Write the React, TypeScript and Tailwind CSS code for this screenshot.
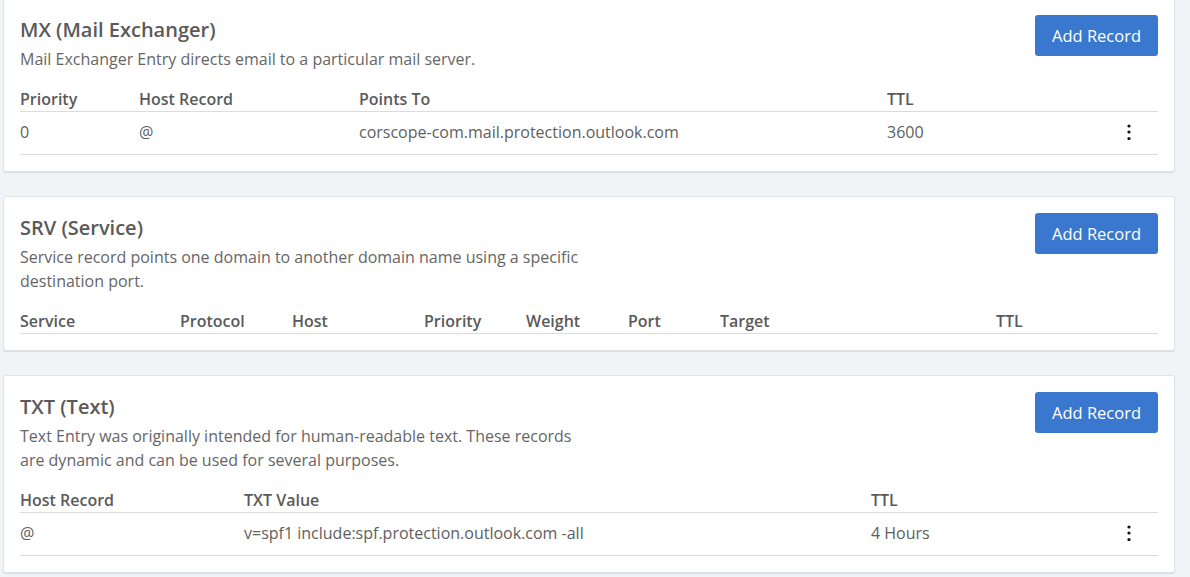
import React from "react";

const font = { fontFamily: '"Open Sans", "Noto Sans", sans-serif' };

function Kebab() {
  return (
    <svg width="4" height="16" viewBox="0 0 4 16" className="block">
      <circle cx="2" cy="2" r="1.6" fill="#111" />
      <circle cx="2" cy="8" r="1.6" fill="#111" />
      <circle cx="2" cy="14.5" r="1.6" fill="#111" />
    </svg>
  );
}

function Card({
  title,
  desc,
  cols,
  headers,
  rows,
}: {
  title: string;
  desc: string;
  cols: string;
  headers: string[];
  rows: string[][];
}) {
  return (
    <div className="bg-white border border-[#dfe3e7] rounded-[3px] shadow-[0_1px_1px_rgba(0,0,0,0.10)] px-4 pt-4 pb-4">
      <div className="flex justify-between">
        <div className="max-w-[572px]">
          <h2 className="text-[20px] leading-[28px] font-semibold text-[#5a5a5a] pt-[1px]">{title}</h2>
          <p className="text-[16px] leading-[24px] text-[#666] font-normal mt-[3px]">{desc}</p>
        </div>
        <button className="h-[41px] w-[123px] rounded-[3px] bg-[#3a78cf] text-white text-[16.5px] font-medium shrink-0 pt-[1px]">
          Add Record
        </button>
      </div>
      <div className="mt-[17px]">
        <div
          className="grid border-b border-[#dcdcdc] text-[16px] leading-[22px] font-semibold text-[#5a5a5a] pb-[1px]"
          style={{ gridTemplateColumns: cols }}
        >
          {headers.map((h, i) => (
            <div key={i}>{h}</div>
          ))}
          <div />
        </div>
        {rows.map((r, ri) => (
          <div
            key={ri}
            className="grid items-center h-[43px] border-b border-[#dcdcdc] text-[16px] text-[#606060] font-normal pb-[3px]"
            style={{ gridTemplateColumns: cols }}
          >
            {r.map((c, ci) => (
              <div key={ci}>{c}</div>
            ))}
            <div className="flex justify-center pt-[1px]">
              <Kebab />
            </div>
          </div>
        ))}
      </div>
    </div>
  );
}

export default function App() {
  return (
    <div className="min-h-[577px] bg-[#f0f4f7] pl-[3px] pr-[15px] pb-6" style={font}>
      <div className="flex flex-col gap-[24px] -mt-[2px]">
        <Card
          title="MX (Mail Exchanger)"
          desc="Mail Exchanger Entry directs email to a particular mail server."
          cols="119px 220px 528px 1fr 58px"
          headers={["Priority", "Host Record", "Points To", "TTL"]}
          rows={[["0", "@", "corscope-com.mail.protection.outlook.com", "3600"]]}
        />
        <Card
          title="SRV (Service)"
          desc="Service record points one domain to another domain name using a specific destination port."
          cols="160px 112px 132px 102px 102px 92px 276px 1fr 58px"
          headers={["Service", "Protocol", "Host", "Priority", "Weight", "Port", "Target", "TTL"]}
          rows={[]}
        />
        <Card
          title="TXT (Text)"
          desc="Text Entry was originally intended for human-readable text. These records are dynamic and can be used for several purposes."
          cols="224px 627px 1fr 58px"
          headers={["Host Record", "TXT Value", "TTL"]}
          rows={[["@", "v=spf1 include:spf.protection.outlook.com -all", "4 Hours"]]}
        />
      </div>
    </div>
  );
}
